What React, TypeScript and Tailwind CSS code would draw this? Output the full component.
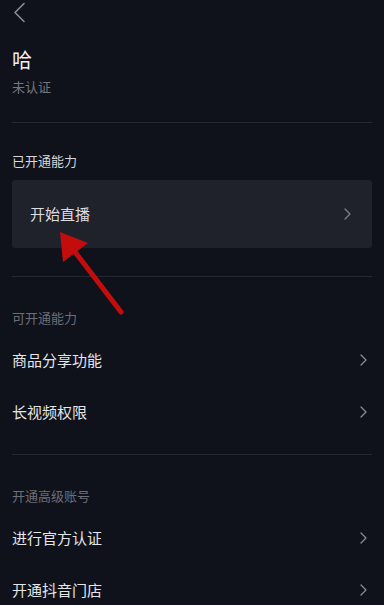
import React from 'react';

const Chevron: React.FC<{ className?: string }> = ({ className }) => (
  <svg width="7" height="12" viewBox="0 0 7 12" fill="none" className={className}>
    <path d="M1 1l5 5-5 5" stroke="currentColor" strokeWidth="1.3" strokeLinecap="round" strokeLinejoin="round" />
  </svg>
);

const Row: React.FC<{ label: string }> = ({ label }) => (
  <div className="h-[52px] flex items-center justify-between">
    <span className="text-[15px] text-[#e6e6e9]">{label}</span>
    <Chevron className="text-[#8a8b91] mr-[5px]" />
  </div>
);

const App: React.FC = () => {
  return (
    <div
      className="relative w-[384px] h-[605px] overflow-hidden bg-[#0f121b] px-[12px]"
      style={{ fontFamily: '"Noto Sans CJK SC", "Noto Sans", sans-serif' }}
    >
      {/* header */}
      <div className="h-[24px] flex items-center pl-[1px]">
        <svg width="13" height="21" viewBox="0 0 13 21" fill="none" className="text-[#8c8d93]">
          <path d="M11 1.5L2 10.5l9 9" stroke="currentColor" strokeWidth="1.6" strokeLinecap="round" strokeLinejoin="round" />
        </svg>
      </div>

      <div className="mt-[21px] h-[30px] leading-[30px] text-[20px] text-[#f0f0f2]">哈</div>
      <div className="mt-[2px] h-[20px] leading-[20px] text-[13px] text-[#74767e]">未认证</div>

      <div className="mt-[25px] h-px bg-[#252732]" />

      <div className="mt-[28px] h-[20px] leading-[20px] text-[13px] text-[#d6d6da]">已开通能力</div>
      <div className="mt-[9px] h-[68px] rounded-[3px] bg-[#1f212b] flex items-center justify-between pl-[18px] pr-[21px]">
        <span className="text-[15px] text-[#dcdce0]">开始直播</span>
        <Chevron className="text-[#7f8087]" />
      </div>

      <div className="mt-[28px] h-px bg-[#252732]" />

      <div className="mt-[31px] h-[20px] leading-[20px] text-[13px] text-[#6c6e77]">可开通能力</div>
      <div className="mt-[6px]">
        <Row label="商品分享功能" />
        <Row label="长视频权限" />
      </div>

      <div className="mt-[16px] h-px bg-[#252732]" />

      <div className="mt-[31px] h-[20px] leading-[20px] text-[13px] text-[#6c6e77]">开通高级账号</div>
      <div className="mt-[6px]">
        <Row label="进行官方认证" />
        <Row label="开通抖音门店" />
      </div>

      {/* red annotation arrow */}
      <svg className="absolute left-0 top-0 pointer-events-none" width="384" height="605" viewBox="0 0 384 605">
        <line x1="121" y1="312" x2="72" y2="248" stroke="#c30d0d" strokeWidth="5" strokeLinecap="round" />
        <polygon points="60,232 63,262 88,243" fill="#c30d0d" />
      </svg>
    </div>
  );
};

export default App;
